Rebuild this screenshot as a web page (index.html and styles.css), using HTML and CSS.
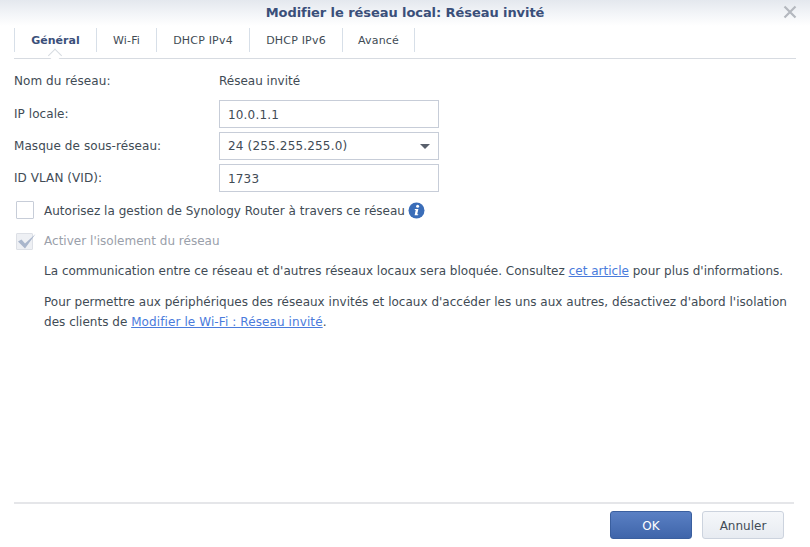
FILE: index.html
```html
<!DOCTYPE html>
<html lang="fr">
<head>
<meta charset="utf-8">
<title>Modifier le réseau local</title>
<link rel="stylesheet" href="styles.css">
</head>
<body>
<div class="dialog">
  <header class="titlebar">
    <h1 class="title">Modifier le réseau local: Réseau invité</h1>
    <svg class="close" width="14" height="14" viewBox="0 0 14 14"><path d="M1.5 1.5L12.5 12.5M12.5 1.5L1.5 12.5" stroke="#b4b8bf" stroke-width="2.2" fill="none"/></svg>
  </header>
  <nav class="tabs">
    <span class="tab active">Général</span>
    <span class="tab">Wi-Fi</span>
    <span class="tab">DHCP IPv4</span>
    <span class="tab">DHCP IPv6</span>
    <span class="tab">Avancé</span>
  </nav>
  <main class="content">
    <div class="row first"><span class="label">Nom du réseau:</span><span class="value">Réseau invité</span></div>
    <div class="row"><span class="label">IP locale:</span><span class="field">10.0.1.1</span></div>
    <div class="row tight"><span class="label">Masque de sous-réseau:</span><span class="field select">24 (255.255.255.0)<i class="arrow"></i></span></div>
    <div class="row tight"><span class="label">ID VLAN (VID):</span><span class="field">1733</span></div>
    <div class="check-row manage">
      <span class="box"></span>
      <span class="check-label">Autorisez la gestion de Synology Router à travers ce réseau</span>
      <svg class="info" width="17" height="17" viewBox="0 0 17 17"><circle cx="8.5" cy="8.5" r="8" fill="#3a6db8"/><circle cx="9.6" cy="4.3" r="1.5" fill="#fff"/><path d="M6.9 7h3.5L9.2 12.2h1.1l-.3 1.1H6.6l1.1-5.2H6.7z" fill="#fff"/></svg>
    </div>
    <div class="check-row isolate">
      <span class="box disabled">
        <svg class="tick" width="21" height="17" viewBox="0 0 21 17"><path d="M2 8.5L9 15.5L19.5 1L9 10.5L5.5 6.5z" fill="#a9b6cc"/></svg>
      </span>
      <span class="check-label muted">Activer l'isolement du réseau</span>
    </div>
    <p class="note one">La communication entre ce réseau et d'autres réseaux locaux sera bloquée. Consultez <a href="#">cet article</a> pour plus d'informations.</p>
    <p class="note two">Pour permettre aux périphériques des réseaux invités et locaux d'accéder les uns aux autres, désactivez d'abord l'isolation<br>des clients de <a href="#">Modifier le Wi-Fi : Réseau invité</a>.</p>
  </main>
  <footer class="footer">
    <button class="btn primary" type="button">OK</button>
    <button class="btn" type="button">Annuler</button>
  </footer>
</div>
</body>
</html>
```
FILE: styles.css
```css
* { box-sizing: border-box; }
html, body { margin: 0; height: 100%; }
body {
  background: #fff;
  color: #414b55;
  font-family: "DejaVu Sans", Verdana, sans-serif;
  font-size: 12px;
}
.dialog {
  width: 810px;
  height: 547px;
  display: flex;
  flex-direction: column;
  overflow: hidden;
  background: linear-gradient(#e4e8ee 0, #f3f5f8 14px, #fff 26px);
}
.titlebar {
  height: 25px;
  flex: none;
  display: flex;
  align-items: center;
  justify-content: center;
  position: relative;
}
.title {
  margin: 0;
  font-size: 13px;
  font-weight: bold;
  letter-spacing: -0.07px;
  color: #3a4f7a;
}
.close { position: absolute; left: 783px; top: 5px; }
.tabs {
  flex: none;
  height: 34px;
  margin: 0 14px;
  display: grid;
  grid-template-columns: 83px 60px 93px 93px 72px;
  justify-content: start;
  border-bottom: 1px solid #d7dbe1;
  padding-top: 3px;
  padding-bottom: 6px;
  position: relative;
}
.tab {
  display: flex;
  align-items: center;
  justify-content: center;
  font-size: 11px;
  letter-spacing: 0.2px;
  border-right: 1px solid #d7dfe8;
}
.tab:first-child { border-left: 1px solid #d7dfe8; }
.tab.active { font-weight: bold; letter-spacing: 0; color: #3a4f7a; position: relative; }
.tab.active::after {
  content: "";
  position: absolute;
  left: 35px;
  bottom: -7px;
  width: 9px;
  height: 9px;
  background: #fff;
  border-left: 1px solid #d7dbe1;
  border-top: 1px solid #d7dbe1;
  transform: translateY(1.5px) rotate(45deg);
}
.content {
  flex: 1;
  padding: 0 14px;
  min-height: 0;
}
.row {
  display: flex;
  align-items: center;
  margin-top: 6px;
  height: 28px;
}
.row.first { margin-top: 9px; height: 26px; }
.row.tight { margin-top: 4px; }
.label { width: 205px; letter-spacing: 0.07px; }
.value { color: #414b55; }
.field {
  position: relative;
  width: 220px;
  height: 28px;
  border: 1px solid #c7cdd8;
  padding: 1px 0 0 8px;
  display: flex;
  align-items: center;
  letter-spacing: 0.17px;
}
.field.select { padding-top: 0; }
.arrow {
  position: absolute;
  right: 8px;
  top: 11px;
  border-left: 5px solid transparent;
  border-right: 5px solid transparent;
  border-top: 5px solid #59606c;
}
.check-row { display: flex; align-items: center; }
.manage { margin: 7px 0 0 2px; height: 24px; }
.isolate { margin: 6px 0 0 2px; height: 24px; }
.box {
  flex: none;
  position: relative;
  width: 18px;
  height: 18px;
  border: 1px solid #c7cdd8;
  border-radius: 1px;
  background: #fff;
  margin: 0 10px 3px 0;
}
.box.disabled { width: 17px; height: 17px; margin: 1px 11px 0 0; background: #eef0f4; border-color: #dde0e6; }
.tick { position: absolute; left: -1px; top: -1px; overflow: visible; }
.check-label { line-height: 18px; letter-spacing: 0.02px; }
.muted { color: #9aa0aa; }
.info { margin: 0 0 2px 3px; }
.note { margin: 0 0 0 30px; line-height: 20.5px; }
.note.one { margin-top: 8px; letter-spacing: 0.008px; }
.note.two { margin-top: 10px; letter-spacing: 0.015px; }
a { color: #4a7bdc; }
.note.two a { letter-spacing: 0.1px; }
.footer {
  flex: none;
  height: 45px;
  margin: 0 16px 0 14px;
  border-top: 2px solid #e5e6e9;
  display: flex;
  justify-content: flex-end;
  align-items: flex-start;
  gap: 10px;
  padding: 7px 10px 0 0;
}
.btn {
  width: 82px;
  height: 28px;
  padding: 1px 0 0;
  border: 1px solid #ccd3de;
  border-radius: 3px;
  background: linear-gradient(#f5f7fa, #e7ebf1);
  color: #414b55;
  font: 12px "DejaVu Sans", Verdana, sans-serif;
}
.btn.primary {
  border-color: #3a5f9f;
  background: linear-gradient(#5a80c4, #3f65aa);
  color: #fff;
}
```
